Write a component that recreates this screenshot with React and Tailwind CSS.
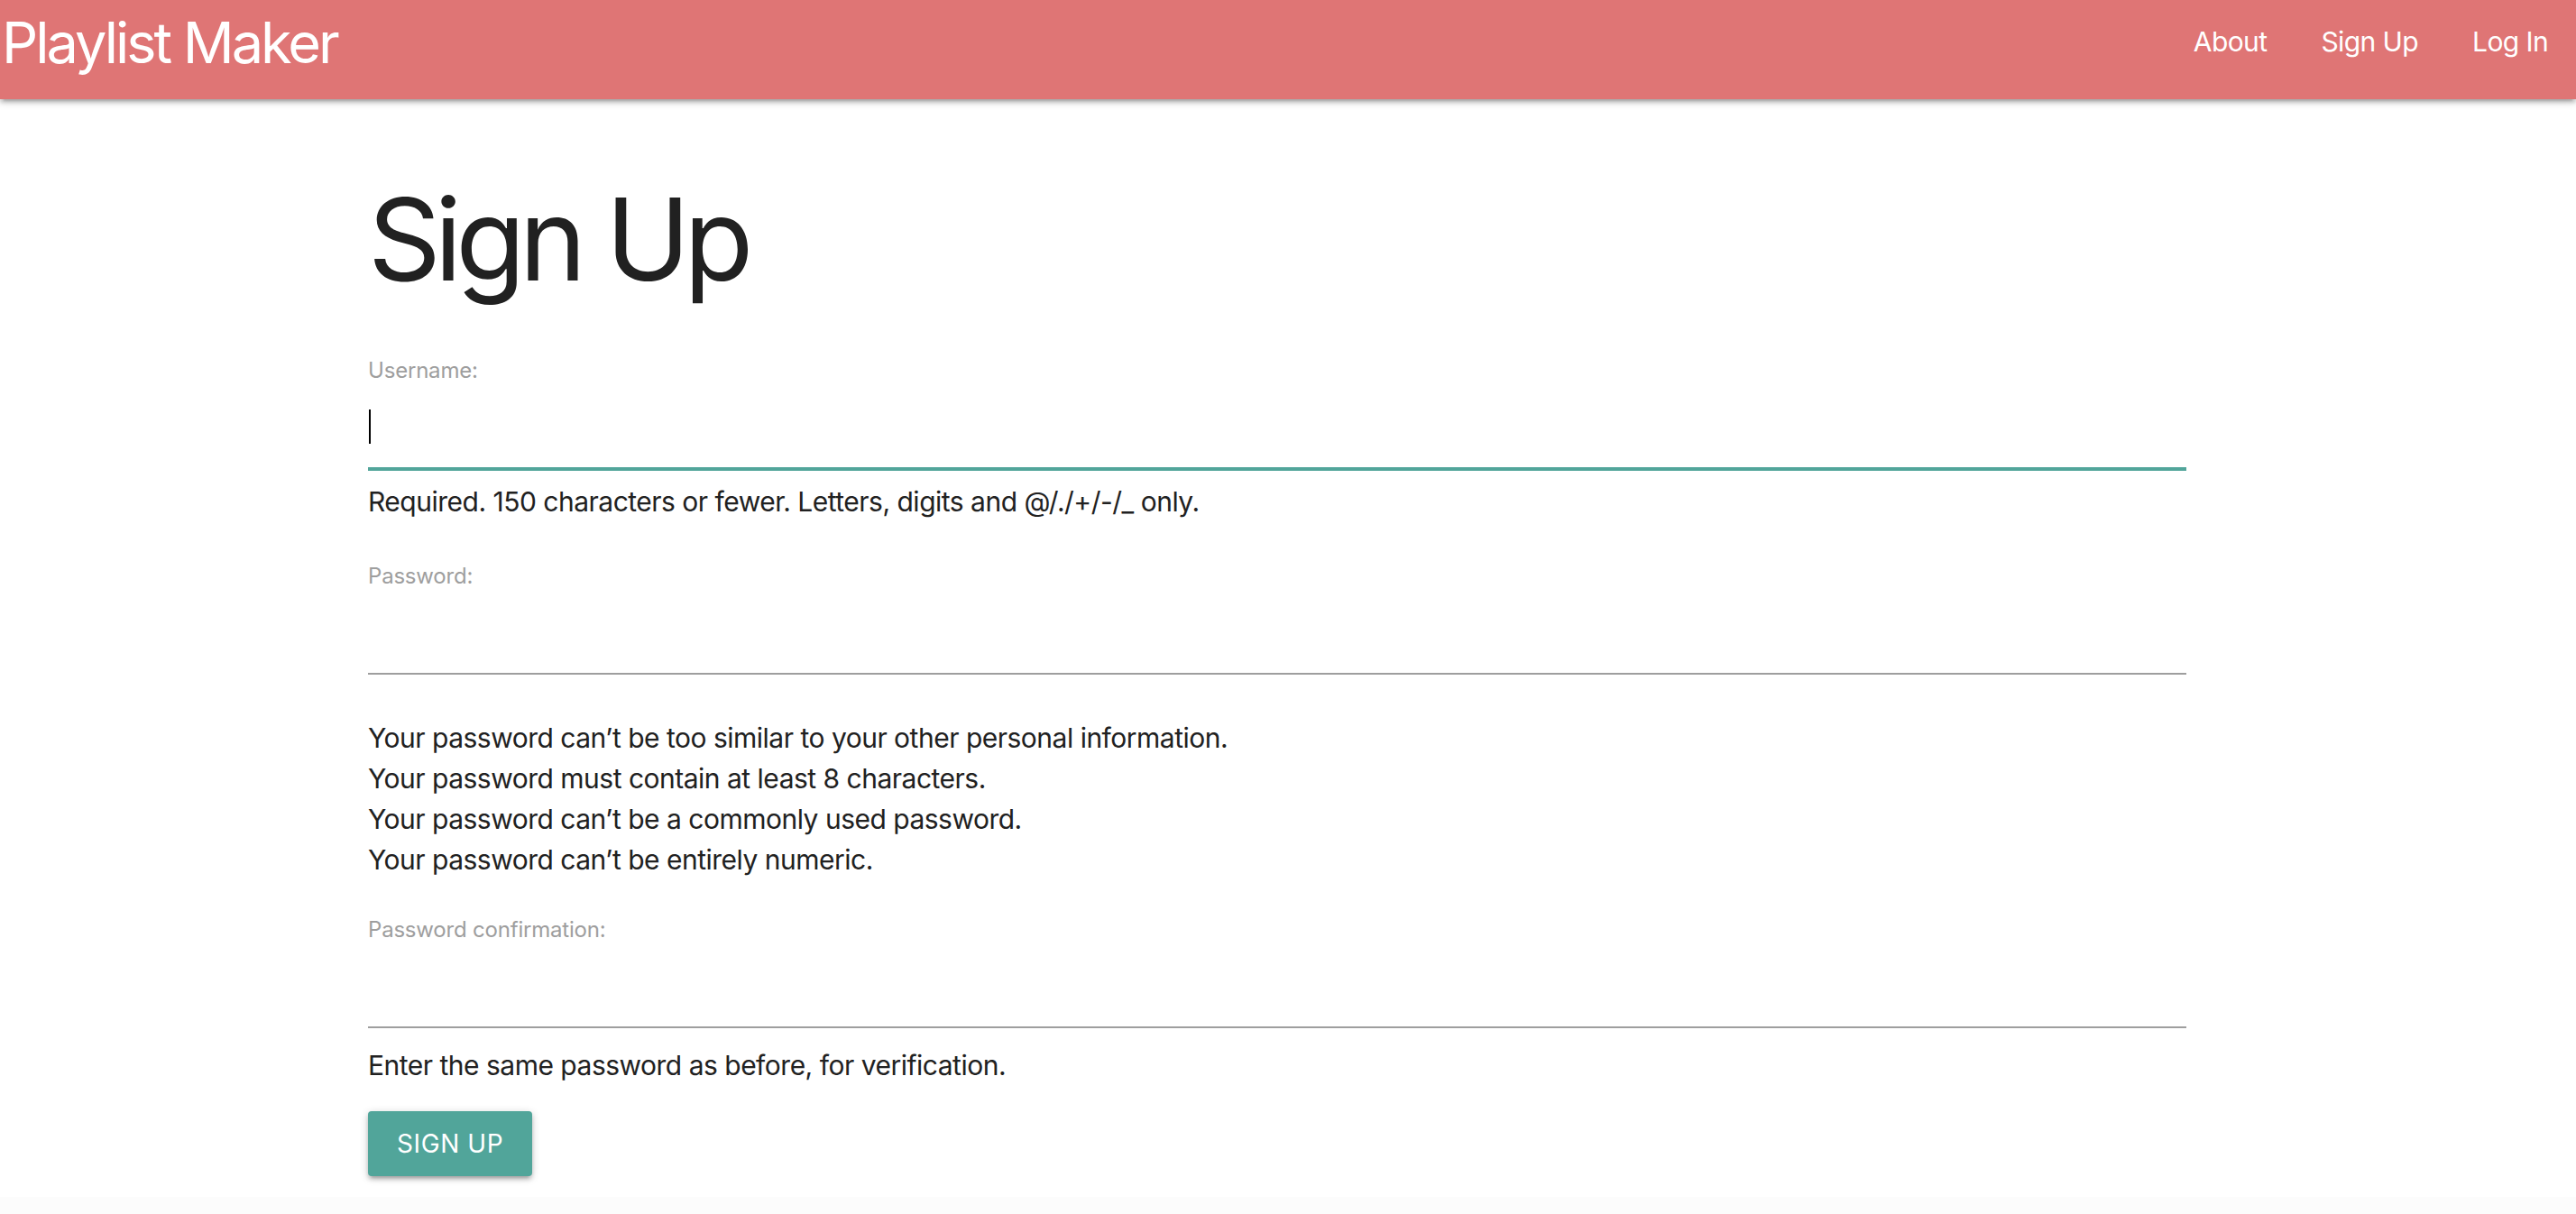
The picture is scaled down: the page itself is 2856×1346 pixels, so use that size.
import { useState } from 'react';

const font = "font-['Inter','Noto_Sans',sans-serif]";

function Field({ label, type, focused, mtHelper, children }) {
  const [value, setValue] = useState('');
  return (
    <div>
      <label className="block text-[24px] leading-[24px] tracking-[-0.2px] text-[#9e9e9e]">{label}</label>
      <div className="relative">
        <input
          type={type}
          value={value}
          onChange={(e) => setValue(e.target.value)}
          className={`block w-full h-[97px] bg-transparent outline-none text-[30px] text-[#212121] border-b-2 ${focused ? 'border-[#51a59a] shadow-[0_2px_0_0_#51a59a]' : 'border-[#9e9e9e]'}`}
        />
        {focused && value === '' && (
          <span className="pointer-events-none absolute left-[1px] top-[31px] w-[2px] h-[38px] bg-black"></span>
        )}
      </div>
      <div className={mtHelper}>{children}</div>
    </div>
  );
}

export default function App() {
  return (
    <div className={`min-h-screen bg-white ${font}`}>
      <nav className="relative z-10 h-[110px] bg-[#df7575] text-white flex items-start justify-between shadow-[0_4px_4px_0_rgba(0,0,0,0.14),0_6px_2px_-4px_rgba(0,0,0,0.12),0_2px_10px_0_rgba(0,0,0,0.2)]">
        <a href="#" className="text-[63px] leading-[94px] tracking-[-3px] pl-[2px]">Playlist Maker</a>
        <ul className="flex text-[30px] leading-[92px] tracking-[-0.6px]">
          <li><a href="#" className="block px-[30px]">About</a></li>
          <li><a href="#" className="block px-[30px]">Sign Up</a></li>
          <li><a href="#" className="block pl-[30px] pr-[31px]">Log In</a></li>
        </ul>
      </nav>

      <main className="ml-[408px] w-[2016px] text-[#212121]">
        <h1 className="mt-[86px] text-[126px] leading-[139px] tracking-[-7px]">Sign Up</h1>

        <form className="mt-[64px] text-[30px] leading-[45px] tracking-[-0.5px]" onSubmit={(e) => e.preventDefault()}>
          <Field label="Username:" type="text" focused mtHelper="mt-[14px]">
            <p>Required. 150 characters or fewer. Letters, digits and @/./+/-/_ only.</p>
          </Field>

          <div className="mt-[48px]">
            <Field label="Password:" type="password" mtHelper="mt-[48px]">
              <ul>
                <li>Your password can’t be too similar to your other personal information.</li>
                <li>Your password must contain at least 8 characters.</li>
                <li>Your password can’t be a commonly used password.</li>
                <li>Your password can’t be entirely numeric.</li>
              </ul>
            </Field>
          </div>

          <div className="mt-[43px]">
            <Field label="Password confirmation:" type="password" mtHelper="mt-[19px]">
              <p>Enter the same password as before, for verification.</p>
            </Field>
          </div>

          <button
            type="submit"
            className="mt-[28px] h-[72px] px-[32px] rounded-[4px] bg-[#51a59a] text-white text-[28px] leading-[72px] tracking-[0.6px] uppercase shadow-[0_4px_4px_0_rgba(0,0,0,0.14),0_6px_2px_-4px_rgba(0,0,0,0.12),0_2px_10px_0_rgba(0,0,0,0.2)]"
          >
            Sign Up
          </button>
        </form>
      </main>

      <footer className="mt-[23px] h-[40px] bg-[#fcfcfc]"></footer>
    </div>
  );
}
